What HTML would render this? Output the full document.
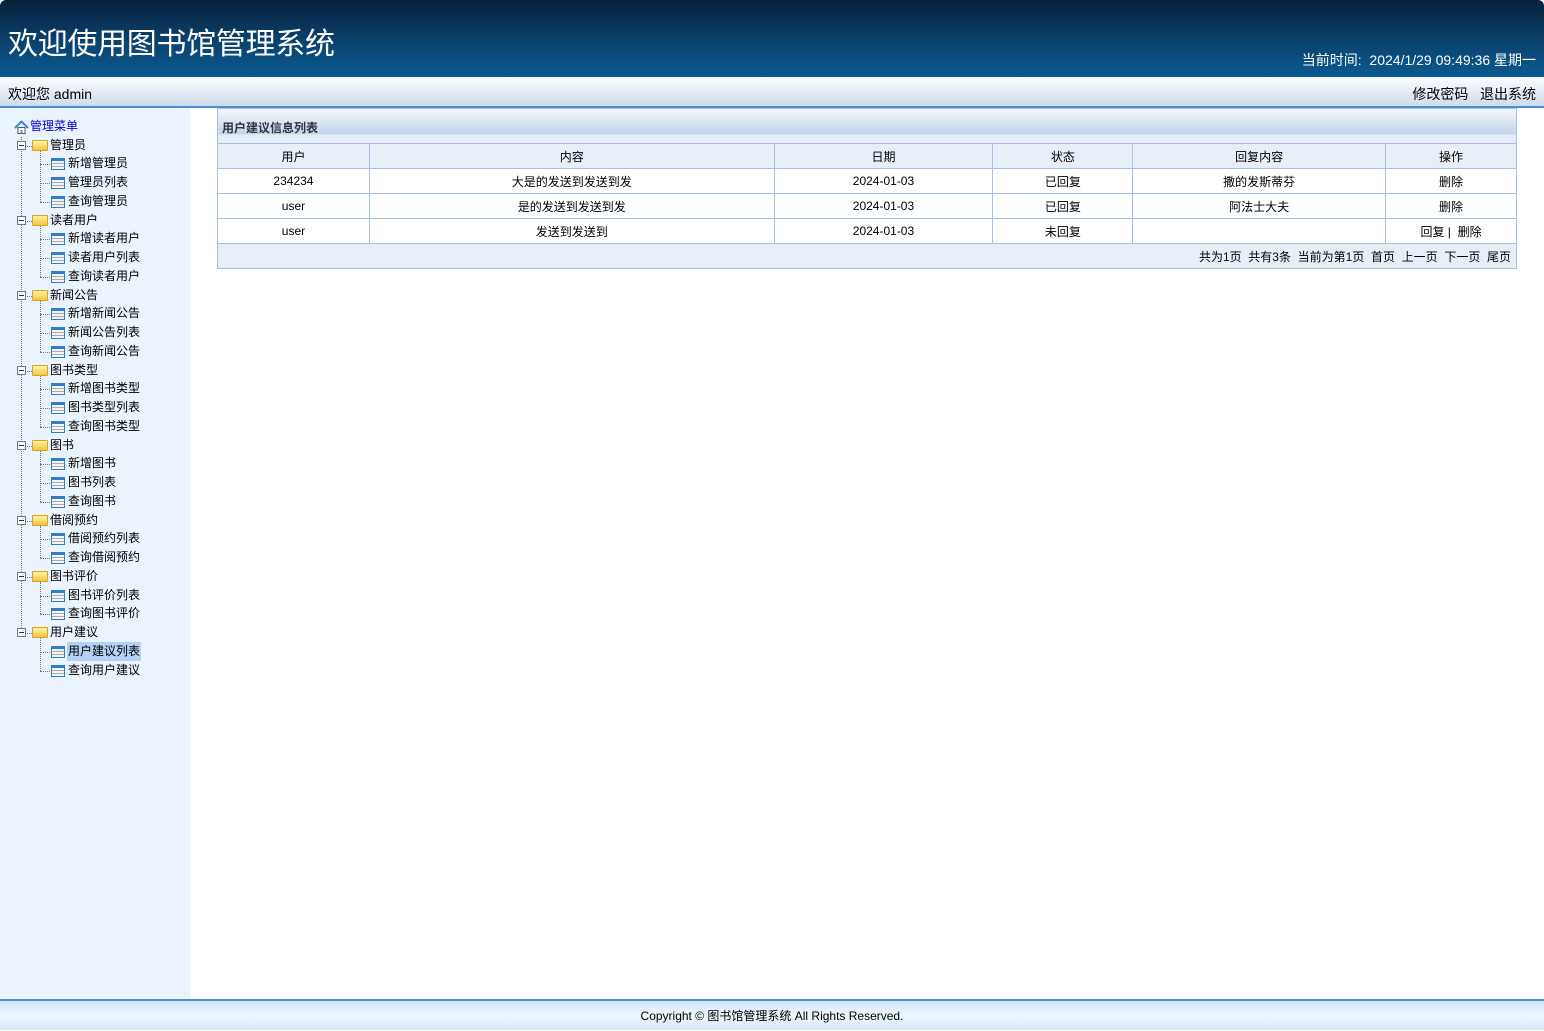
<!DOCTYPE html>
<html><head><meta charset="utf-8"><style>
*{margin:0;padding:0;box-sizing:border-box}
body{width:1544px;height:1030px;position:relative;overflow:hidden;font-family:"Liberation Sans","Noto Sans CJK SC",sans-serif;font-size:12px;color:#000;background:#fff}
#hd{position:absolute;left:0;top:0;width:1544px;height:77px;background:linear-gradient(180deg,#04203a 0%,#0a3d66 45%,#0b5a92 100%);border-radius:6px 6px 0 0}
#hd h1{position:absolute;left:8px;top:19px;font-size:30px;font-weight:normal;color:#fff;font-family:"Liberation Sans","Noto Sans CJK SC",sans-serif;letter-spacing:-0.3px}
#hd .t{position:absolute;right:8px;top:50px;color:#fff;font-size:14px}
#bar{position:absolute;left:0;top:77px;width:1544px;height:31px;background:linear-gradient(180deg,#fbfdff,#cfdceb);border-bottom:2px solid #4a8fd6}
#bar .l{position:absolute;left:8px;top:7px;font-size:14px}
#bar .r{position:absolute;right:8px;top:7px;font-size:14px}
#side{position:absolute;left:0;top:108px;width:190px;height:892px;background:#eaf3fe}
.row{position:absolute;height:19px;line-height:19px;font-size:12px;white-space:nowrap}
.vl{position:absolute;border-left:1px dotted #777}
.hl{position:absolute;border-top:1px dotted #777;height:0}
.minus{position:absolute;width:9px;height:9px;border:1px solid #6b7a8a;background:#fff}
.minus:after{content:"";position:absolute;left:1px;top:3px;width:5px;height:1px;background:#333}
.fold{position:absolute;width:16px;height:11px;background:linear-gradient(#fff3a8,#f4c542);border:1px solid #d9a520;border-radius:1px}
.doc{position:absolute;width:14px;height:12px;border:1px solid #2d7fc9;border-top:3px solid #2d7fc9;background:repeating-linear-gradient(#f4f4f4 0 2px,#aaa 2px 3px)}
#main table{position:absolute;left:217px;top:143px;width:1300px;border-collapse:collapse}
#main td{border:1px solid #a9c1e0;height:25px;text-align:center;font-size:12px}
#main tr.h td{background:#e8eef7}
#tt{position:absolute;left:217px;top:108px;width:1300px;height:36px;border:1px solid #a9c1e0;border-bottom:none;background:linear-gradient(180deg,#f3f7fc 0%,#e0e9f4 30%,#c4d6ea 70%,#e3ecf6 75%,#e8eef7 100%)}
#tt span{position:absolute;left:4px;top:10px;font-size:12px;font-weight:bold;color:#334}
#ft{position:absolute;left:0;top:999px;width:1544px;height:31px;border-top:2px solid #4a8fd6;background:linear-gradient(#d4e6fa,#eef6ff,#d8e8fa);text-align:center;font-size:12px;line-height:30px}
</style></head><body>
<div id="hd"><h1>欢迎使用图书馆管理系统</h1><div class="t">当前时间:&nbsp; 2024/1/29 09:49:36 星期一</div></div>
<div id="bar"><div class="l">欢迎您 admin</div><div class="r">修改密码 &nbsp; 退出系统</div></div>
<div id="side">
<div style="position:absolute;left:14px;top:12px;width:14px;height:14px"><svg width="15" height="15" viewBox="0 0 15 15"><path d="M1 8L7.5 1.5L14 8" fill="none" stroke="#3a86d0" stroke-width="2"/><rect x="4" y="7.5" width="7" height="6" fill="#fff" stroke="#555"/><rect x="6.5" y="10" width="2" height="3.5" fill="#888"/></svg></div>
<div class="row" style="left:30px;top:9px;color:#00c">管理菜单</div>
<div class="vl" style="left:21px;top:29px;height:497px"></div>
</div>
<div id="tree" style="position:absolute;left:0;top:110px"></div>
<script>
var g=[["管理员",["新增管理员","管理员列表","查询管理员"]],["读者用户",["新增读者用户","读者用户列表","查询读者用户"]],["新闻公告",["新增新闻公告","新闻公告列表","查询新闻公告"]],["图书类型",["新增图书类型","图书类型列表","查询图书类型"]],["图书",["新增图书","图书列表","查询图书"]],["借阅预约",["借阅预约列表","查询借阅预约"]],["图书评价",["图书评价列表","查询图书评价"]],["用户建议",["用户建议列表","查询用户建议"]]];
var h="",y=26.5,s=18.75;
g.forEach(function(f){
 var c=y+9;
 h+='<div class="minus" style="left:17px;top:'+(c-5)+'px"></div><div class="hl" style="left:27px;top:'+c+'px;width:5px"></div><div class="fold" style="left:32px;top:'+(c-6)+'px"></div><div class="row" style="left:50px;top:'+(c-10)+'px">'+f[0]+'</div>';
 var y0=c;y+=s;
 f[1].forEach(function(l,i){
  var cc=y+9;
  var sel=l=="用户建议列表";
  h+='<div class="hl" style="left:40px;top:'+cc+'px;width:10px"></div><div class="doc" style="left:51px;top:'+(cc-6)+'px"></div><div class="row" style="left:67px;top:'+(cc-10)+'px;padding:0 1px;'+(sel?'background:#b3d2f5;':'')+'">'+l+'</div>';
  if(i==f[1].length-1)h+='<div class="vl" style="left:40px;top:'+(y0+5)+'px;height:'+(cc-y0-5)+'px"></div>';
  y+=s;
 });
});
document.getElementById("tree").innerHTML=h;
</script>
<div id="main">
<div id="tt"><span>用户建议信息列表</span></div>
<table>
<colgroup><col style="width:152px"><col style="width:405px"><col style="width:219px"><col style="width:140px"><col style="width:253px"><col style="width:131px"></colgroup>
<tr class="h"><td>用户</td><td>内容</td><td>日期</td><td>状态</td><td>回复内容</td><td>操作</td></tr>
<tr><td>234234</td><td>大是的发送到发送到发</td><td>2024-01-03</td><td>已回复</td><td>撒的发斯蒂芬</td><td>删除</td></tr>
<tr><td>user</td><td>是的发送到发送到发</td><td>2024-01-03</td><td>已回复</td><td>阿法士大夫</td><td>删除</td></tr>
<tr><td>user</td><td>发送到发送到</td><td>2024-01-03</td><td>未回复</td><td></td><td>回复 | &nbsp;删除</td></tr>
<tr class="h"><td colspan="6" style="text-align:right;padding-right:5px">共为1页&nbsp; 共有3条&nbsp; 当前为第1页&nbsp; 首页&nbsp; 上一页&nbsp; 下一页&nbsp; 尾页</td></tr>
</table>
</div>
<div id="ft">Copyright © 图书馆管理系统 All Rights Reserved.</div>
</body></html>
